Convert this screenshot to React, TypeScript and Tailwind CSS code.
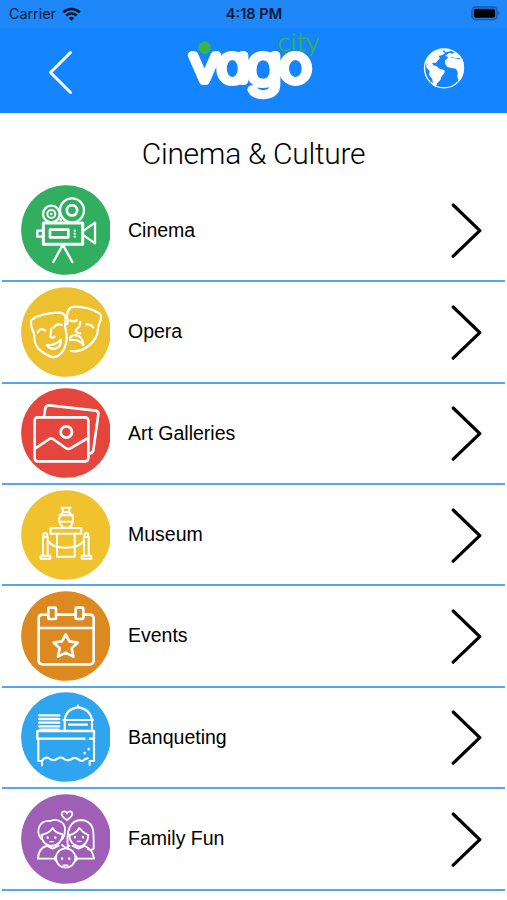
import type { ReactNode } from "react";

type Category = {
  label: string;
  color: string;
  icon: ReactNode;
};

const CATEGORIES: Category[] = [
  { label: "Cinema", color: "#31ae60", icon: <CinemaIcon /> },
  { label: "Opera", color: "#ecc02f", icon: <OperaIcon /> },
  { label: "Art Galleries", color: "#e5453d", icon: <GalleryIcon /> },
  { label: "Museum", color: "#efc22e", icon: <MuseumIcon /> },
  { label: "Events", color: "#dc8a1f", icon: <EventsIcon /> },
  { label: "Banqueting", color: "#2ea5ee", icon: <BanquetIcon /> },
  { label: "Family Fun", color: "#9f5fb7", icon: <FamilyIcon /> },
];

export default function App() {
  return (
    <div className="flex h-[900px] w-full flex-col overflow-hidden bg-white text-black">
      <header className="h-[113px] shrink-0 bg-[#1484ff]">
        <StatusBar />
        <NavBar />
      </header>

      <h1 className="flex h-[67.8px] shrink-0 items-center justify-center pt-[14px] font-['Roboto',sans-serif] text-[30px] leading-none font-light tracking-[-0.3px]">
        Cinema &amp; Culture
      </h1>

      <ul className="px-0.5">
        {CATEGORIES.map((c) => (
          <CategoryRow key={c.label} category={c} />
        ))}
      </ul>
    </div>
  );
}

function StatusBar() {
  return (
    <div className="grid h-7 grid-cols-3 items-center bg-[#1f87f8] pr-1.5 pl-[9px] font-['Inter',sans-serif] text-[#071a35]">
      <div className="flex items-center gap-1.5">
        <span className="text-[14.3px] leading-none">Carrier</span>
        <svg width="19" height="15" viewBox="0 0 19 15" fill="none" stroke="#03142c" strokeWidth="2.6">
          <path d="M1.2 5.4a12 12 0 0 1 16.6 0" />
          <path d="M4.2 8.6a7.7 7.7 0 0 1 10.6 0" />
          <path d="M9.5 13.8 6.8 11.1a4 4 0 0 1 5.4 0z" fill="#03142c" stroke="none" />
        </svg>
      </div>
      <span className="-ml-0.5 text-center text-[14.6px] leading-none font-semibold whitespace-nowrap">4:18 PM</span>
      <svg className="-mt-0.5 justify-self-end" width="31" height="15" viewBox="0 0 31 15">
        <rect x="2" y="1" width="25" height="12.5" rx="3.5" fill="none" stroke="#1258ad" strokeWidth="1.3" />
        <rect x="3.8" y="2.8" width="21.4" height="9" rx="1.8" fill="#000" />
        <path d="M28.3 5.2q2 2 0 4.2z" fill="#1258ad" />
      </svg>
    </div>
  );
}

function NavBar() {
  return (
    <div className="flex h-[85px] pr-[42px] pl-[48px]">
      <button type="button" aria-label="Back" className="mt-[22px] h-[45px] w-[26px]">
        <svg width="26" height="45" viewBox="0 0 26 45" fill="none" stroke="#fff" strokeWidth="3" strokeLinecap="round" strokeLinejoin="round">
          <path d="M22.5 2.5 2.5 22.5l20 20" />
        </svg>
      </button>
      <Logo />
      <button type="button" aria-label="Language" className="mt-[19px] ml-auto h-[43px] w-[42px]">
        <GlobeIcon />
      </button>
    </div>
  );
}

function Logo() {
  return (
    <svg className="ml-[110px] h-[85px] w-[140px] overflow-visible" viewBox="184 28 140 85">
      <text
        y="81.5"
        fontSize="47"
        fill="#fff"
        stroke="#fff"
        strokeWidth="8"
        strokeLinejoin="round"
        strokeLinecap="round"
        transform="scale(1.15 1)"
        className="font-['Inter',sans-serif] font-thin [font-feature-settings:'cv11']"
      >
        <tspan x="165 189.2">va</tspan>
        <tspan x="214.6" y="84.5" fontSize="52">g</tspan>
        <tspan x="243.2" y="81.5">o</tspan>
      </text>
      <circle cx="204.5" cy="47.5" r="6.3" fill="#37b44a" />
      <text x="277.5" y="50.5" fontSize="26" textLength="42" lengthAdjust="spacingAndGlyphs" fill="#37b44a" stroke="#37b44a" strokeWidth="0.4" className="font-['Lato',sans-serif] font-light">
        city
      </text>
    </svg>
  );
}

function GlobeIcon() {
  return (
    <svg width="42" height="43" viewBox="259 141 126 129" fill="#fff">
      <circle cx="322" cy="205" r="58.5" fill="none" stroke="#fff" strokeWidth="4" />
      <path d="M266 190q8-25 30-36 12-6 28-7l-6 8 8 4-8 6-13 3 5 6-6 7-6 7-12 1 5 8-12-1z" />
      <path d="M268 192l14 4 16 1 11 9 15 5-1 9-8 9-4 11-9 9-5 12-8-5-2-18-10-14 2-11-9-9z" />
      <path d="M320 147l18 1 3 6-14 3zM326 167l12-9 8 3 10-4q14 6 19 17l-16 1-13-4-8 2z" />
      <path d="M325 182l10-11 17 3 12 4 14-2q6 20 3 38-3 18-14 29l-5-12 1-14-5-11-14-2-12-3-7-10z" />
    </svg>
  );
}

function CategoryRow({ category }: { category: Category }) {
  return (
    <li className="flex h-[101.4px] items-center border-b-2 border-[#56a5ef] pr-[22px] pl-[19px]">
      <svg
        width="89"
        height="90"
        viewBox="33 15 267 270"
        fill="none"
        stroke="#fff"
        strokeWidth="7"
        strokeLinecap="round"
        strokeLinejoin="round"
        className="shrink-0"
      >
        <circle cx="168" cy="150" r="134.5" fill={category.color} stroke="none" />
        {category.icon}
      </svg>
      <span className="ml-[18px] flex-1 font-['Liberation_Sans',Arial,sans-serif] text-[19.5px] leading-none">
        {category.label}
      </span>
      <svg width="33" height="56" viewBox="0 0 33 56" fill="none" stroke="#000" strokeWidth="3.2" strokeLinecap="round" strokeLinejoin="round">
        <path d="M3.2 3 29.8 28.7 3.2 54.2" />
      </svg>
    </li>
  );
}

function CinemaIcon() {
  return (
    <>
      <circle cx="124" cy="102" r="25" />
      <circle cx="124" cy="102" r="12" strokeWidth="6" />
      <circle cx="124" cy="102" r="2" strokeWidth="4" />
      <circle cx="186" cy="91" r="36" />
      <circle cx="186" cy="91" r="15.5" strokeWidth="8" />
      <path d="M100 129h118v64H100z" strokeWidth="9" />
      <path d="M120 149h55v23h-55z" strokeWidth="8" />
      <path d="M96 152H82v18h14M222 151l33-23v62l-33-23M157 197l-27 49M160 197l27 49" />
      <path d="M191 152h7M191 161h7M191 170h7" strokeWidth="5" strokeLinecap="butt" />
      <circle cx="152" cy="119" r="2" strokeWidth="4" />
    </>
  );
}

function OperaIcon() {
  return (
    <g strokeWidth="6.5">
      <path d="M64 114q29-22 87-22 14 3 16 16l-2 24 5 29q1 28-14 50-13 15-26 15-22-5-45-26-14-18-12-43-13-25-9-43z" />
      <path d="M171 103q1-27 21-29 45 0 76 20 9 9 3 23-8 15-9 39-10 26-35 42-20 13-45 9M171 106q5 10 0 21" />
      <path d="M83 151q9-16 22-5M131 137q9-15 24-8M124 140l-3 25q6 5 13-1" />
      <path d="M110 189q25 3 43-16 2 22-18 27-14 3-25-11z" />
      <path d="M181 115q9 7 20-1M229 127q13-2 21 9M211 120l-3 14q-9 6-11 14 5 7 14 6" />
      <path d="M180 174q-2-16 19-14 19 3 21 29-15-19-40-15z" />
    </g>
  );
}

function GalleryIcon() {
  return (
    <>
      <path d="M102 101l4-26q3-9 12-8l140 16q8 2 7 11l-15 108q-2 8-10 9" strokeWidth="8" />
      <rect x="74" y="103" width="161" height="132" rx="9" strokeWidth="8" />
      <circle cx="169" cy="147" r="17" strokeWidth="8.5" />
      <path d="M76 196l42-28q5-4 11 0l38 27q7 5 14 1l53-31" strokeWidth="8" />
    </>
  );
}

function MuseumIcon() {
  return (
    <g strokeWidth="6">
      <path d="M154 68h28M158 69v14q-10 8-11 21 1 14 13 24h17q12-10 12-24 0-13-11-21V69M148 91h41M149 110h39M158 82h20" />
      <rect x="122" y="129" width="92" height="17" />
      <path d="M141 148v67h53v-67" />
      <path d="M99 156h14v56H99zM222 156h14v56h-14zM92 212h29v9H92zM215 212h29v9h-29z" />
      <circle cx="106" cy="150" r="6" />
      <circle cx="229" cy="150" r="6" />
      <path d="M115 168q10 20 52 20t53-20" />
    </g>
  );
}

function EventsIcon() {
  return (
    <g strokeWidth="8">
      <path d="M113 86H98q-12 0-12 12v125q0 12 12 12h141q12 0 12-12V98q0-12-12-12h-15M140 86h54M88 126h162" />
      <rect x="115" y="65" width="23" height="34" rx="3" />
      <rect x="197" y="65" width="23" height="34" rx="3" />
      <path d="M167 145l11 21 25 4-18 17 5 25-23-12-23 12 5-25-18-17 25-4z" />
    </g>
  );
}

function BanquetIcon() {
  return (
    <g strokeWidth="6.5">
      <rect x="82" y="132" width="170" height="23" strokeWidth="7" />
      <path d="M85 157v65h11v13M252 157v65h-13v12M96 222q8-13 19-9 10 8 19 6l14-7q8-2 18 6 9 4 19-2 10-7 20 1 12 10 19 0l9-3" />
      <path d="M87 85h61M87 96h61M87 107h61M87 118h61M91 128h55" strokeWidth="7" />
      <path d="M164 128V99q4-34 40-38 36 4 42 38v29M160 99h89M204 56v4M177 113h54" />
      <path d="M236 186v1M224 198v1" strokeWidth="7" />
      <path d="M226 154h11" stroke="#2ea5ee" strokeWidth="8" strokeLinecap="butt" />
    </g>
  );
}

function FamilyIcon() {
  return (
    <g strokeWidth="5.5">
      <path d="M171 93q-16-10-16-18 1-9 9-8 5 1 7 6 3-6 8-6 8 0 8 8-1 8-16 18z" />
      <path d="M93 149q-13-18-5-36 9-20 34-17 12-7 26 0 17 7 17 26 0 16-7 27" />
      <path d="M95 139q0 28 29 32 29-2 34-32M94 138q24-5 34-21 9 16 28 18" />
      <path d="M174 176q-5-39 5-61 10-22 35-22 23 1 33 22 5 13 4 64-7 7-18 1" />
      <path d="M178 139q1 28 29 34 27-4 28-35M178 138q21-4 30-21 9 13 26 21" />
      <path d="M109 171q-24 7-25 38h47M224 171q25 9 28 38h-50M111 171l17 8 18-9M188 171l18 8 17-8M156 168l12 9 11-7" />
      <circle cx="167" cy="207" r="29" />
      <path d="M137 202q-6 7 0 13M198 202q6 7 0 13M160 229h13" />
      <path d="M113 145v1M136 145v1M195 144v1M219 144v1M156 208v1M178 208v1" strokeWidth="7" />
      <path d="M119 158h11M202 157h11" strokeWidth="4" />
    </g>
  );
}
